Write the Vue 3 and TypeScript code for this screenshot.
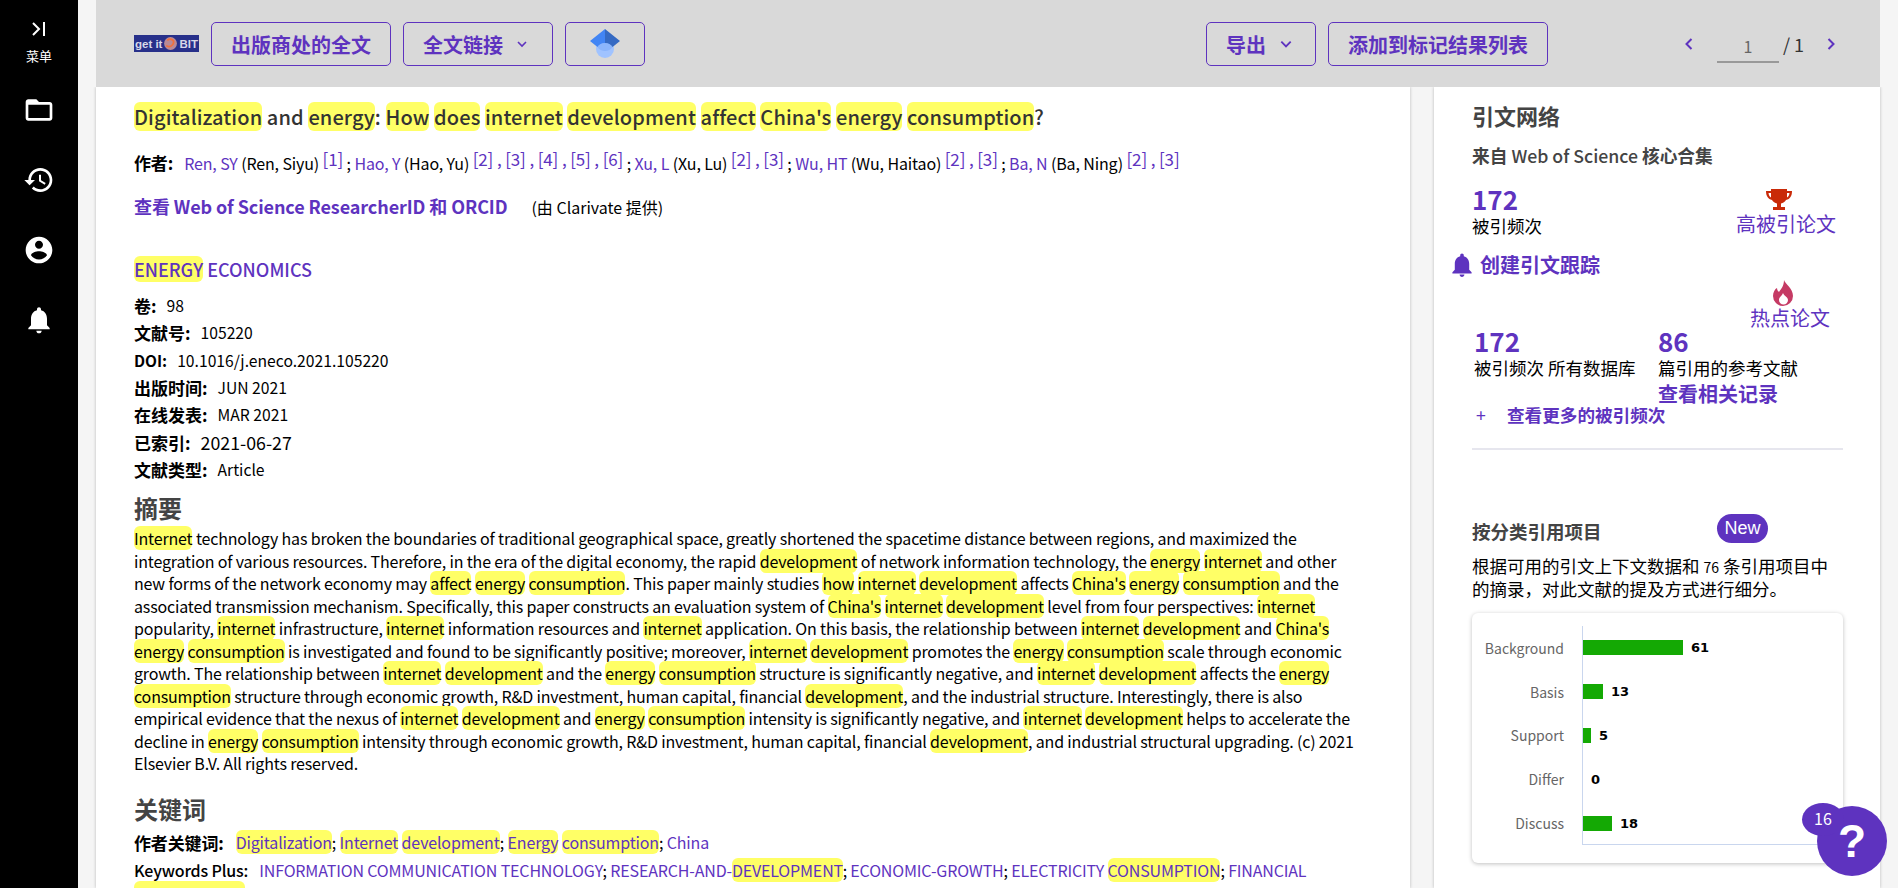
<script setup lang="ts">
const hitWords = /\b(digitalization|does|how|affect|china's|internet|development|energy|consumption)\b/i

function segs(text: string) {
  return text.split(new RegExp(hitWords.source, 'i')).map((t, i) => ({ t, hit: i % 2 === 1 }))
}

const title = "Digitalization and energy: How does internet development affect China's energy consumption?"

const authors = [
  { link: 'Ren, SY', name: '(Ren, Siyu)', refs: '[1]' },
  { link: 'Hao, Y', name: '(Hao, Yu)', refs: '[2] , [3] , [4] , [5] , [6]' },
  { link: 'Xu, L', name: '(Xu, Lu)', refs: '[2] , [3]' },
  { link: 'Wu, HT', name: '(Wu, Haitao)', refs: '[2] , [3]' },
  { link: 'Ba, N', name: '(Ba, Ning)', refs: '[2] , [3]' },
]

const meta = [
  { label: '卷:', value: '98' },
  { label: '文献号:', value: '105220' },
  { label: 'DOI:', value: '10.1016/j.eneco.2021.105220', latin: true },
  { label: '出版时间:', value: 'JUN 2021' },
  { label: '在线发表:', value: 'MAR 2021' },
  { label: '已索引:', value: '2021-06-27', big: true },
  { label: '文献类型:', value: 'Article' },
]

const abstractLines = [
  'Internet technology has broken the boundaries of traditional geographical space, greatly shortened the spacetime distance between regions, and maximized the',
  'integration of various resources. Therefore, in the era of the digital economy, the rapid development of network information technology, the energy internet and other',
  "new forms of the network economy may affect energy consumption. This paper mainly studies how internet development affects China's energy consumption and the",
  "associated transmission mechanism. Specifically, this paper constructs an evaluation system of China's internet development level from four perspectives: internet",
  "popularity, internet infrastructure, internet information resources and internet application. On this basis, the relationship between internet development and China's",
  'energy consumption is investigated and found to be significantly positive; moreover, internet development promotes the energy consumption scale through economic',
  'growth. The relationship between internet development and the energy consumption structure is significantly negative, and internet development affects the energy',
  'consumption structure through economic growth, R&D investment, human capital, financial development, and the industrial structure. Interestingly, there is also',
  'empirical evidence that the nexus of internet development and energy consumption intensity is significantly negative, and internet development helps to accelerate the',
  'decline in energy consumption intensity through economic growth, R&D investment, human capital, financial development, and industrial structural upgrading. (c) 2021',
  'Elsevier B.V. All rights reserved.',
]

const authorKeywords = ['Digitalization', 'Internet development', 'Energy consumption', 'China']
const keywordsPlus = ['INFORMATION COMMUNICATION TECHNOLOGY', 'RESEARCH-AND-DEVELOPMENT', 'ECONOMIC-GROWTH', 'ELECTRICITY CONSUMPTION', 'FINANCIAL']

const chart = [
  { label: 'Background', value: 61, width: 100 },
  { label: 'Basis', value: 13, width: 20 },
  { label: 'Support', value: 5, width: 8 },
  { label: 'Differ', value: 0, width: 0 },
  { label: 'Discuss', value: 18, width: 29 },
]

const navIcons = [
  'M20 6h-8l-2-2H4c-1.1 0-1.99.9-1.99 2L2 18c0 1.1.9 2 2 2h16c1.1 0 2-.9 2-2V8c0-1.1-.9-2-2-2zm0 12H4V8h16v10z',
  'M13 3c-4.97 0-9 4.03-9 9H1l3.89 3.89.07.14L9 12H6c0-3.87 3.13-7 7-7s7 3.13 7 7-3.13 7-7 7c-1.93 0-3.68-.79-4.94-2.06l-1.42 1.42C8.27 19.99 10.51 21 13 21c4.97 0 9-4.03 9-9s-4.03-9-9-9zm-1 5v5l4.28 2.54.72-1.21-3.5-2.08V8H12z',
  'M12 2C6.48 2 2 6.48 2 12s4.48 10 10 10 10-4.48 10-10S17.52 2 12 2zm0 3c1.66 0 3 1.34 3 3s-1.34 3-3 3-3-1.34-3-3 1.34-3 3-3zm0 14.2c-2.5 0-4.71-1.28-6-3.22.03-1.99 4-3.08 6-3.08 1.99 0 5.97 1.09 6 3.08-1.29 1.94-3.5 3.22-6 3.22z',
  'M12 22c1.1 0 2-.9 2-2h-4c0 1.1.89 2 2 2zm6-6v-5c0-3.07-1.64-5.64-4.5-6.32V4c0-.83-.67-1.5-1.5-1.5s-1.5.67-1.5 1.5v.68C7.63 5.36 6 7.92 6 11v5l-2 2v1h16v-1l-2-2z',
]
const bellPath = navIcons[3]
</script>

<template>
  <div class="page">
    <aside class="sidebar">
      <svg class="menu-icon" width="20" height="20" viewBox="0 0 20 20" fill="none" stroke="#fff" stroke-width="2">
        <path d="M4 4l6 6-6 6" />
        <path d="M15 3v14" />
      </svg>
      <div class="menu-label">菜单</div>
      <svg v-for="(d, i) in navIcons" :key="i" class="nav-icon" width="32" height="32" viewBox="0 0 24 24" fill="#fff">
        <path :d="d" />
      </svg>
    </aside>

    <div class="workspace">
      <header class="topbar">
        <div class="logo">
          <span>get it</span>
          <svg width="15" height="15" viewBox="0 0 14 14" fill="none">
            <circle cx="7" cy="7" r="6" fill="#b98a96" />
            <path d="M3 9c3 2 7 0 7-4M4 4c2-2 6-1 6 2" stroke="#f0703c" stroke-width="1.6" />
          </svg>
          <span>BIT</span>
        </div>
        <button class="btn">出版商处的全文</button>
        <button class="btn wide">
          全文链接
          <svg class="caret" width="12" height="12" viewBox="0 0 12 12" fill="none" stroke="#5e33bf" stroke-width="1.6"><path d="M2 4l4 4 4-4" /></svg>
        </button>
        <button class="btn scholar">
          <svg width="32" height="32" viewBox="0 0 32 32">
            <circle cx="16" cy="21" r="9" fill="#a0c3ff" />
            <path d="M16 1L1 13l7.5 6a9 9 0 0 1 7.5-4z" fill="#4285f4" />
            <path d="M16 1l15 12-7.5 6A9 9 0 0 0 16 15z" fill="#356ac3" />
            <path d="M8.500 19a9 9 0 0 1 15 0 9 9 0 0 1-15 0z" fill="#76a7fa" opacity=".5" />
          </svg>
        </button>
        <div class="spacer"></div>
        <button class="btn export">
          导出
          <svg class="caret" width="14" height="14" viewBox="0 0 12 12" fill="none" stroke="#5e33bf" stroke-width="1.6"><path d="M2 4l4 4 4-4" /></svg>
        </button>
        <button class="btn">添加到标记结果列表</button>
        <div class="pager">
          <svg width="14" height="14" viewBox="0 0 14 14" fill="none" stroke="#5e33bf" stroke-width="2"><path d="M9.500 2L4.500 7l5 5" /></svg>
          <span class="page-input">1</span>
          <span class="page-total">/ 1</span>
          <svg width="14" height="14" viewBox="0 0 14 14" fill="none" stroke="#5e33bf" stroke-width="2"><path d="M4.500 2l5 5-5 5" /></svg>
        </div>
      </header>

      <div class="columns">
        <main class="record">
          <h1 class="title">
            <span v-for="(s, i) in segs(title)" :key="i" :class="{ hl: s.hit }">{{ s.t }}</span>
          </h1>
          <div class="authors">
            <b class="authors-label">作者:</b>
            <template v-for="(a, i) in authors" :key="i">
              <a>{{ a.link }}</a> {{ a.name }} <a class="refs">{{ a.refs }}</a><template v-if="i < authors.length - 1"> ; </template>
            </template>
          </div>
          <div class="researcher">
            <a class="researcher-link">查看 Web of Science ResearcherID 和 ORCID</a>
            <span class="provided">(由 Clarivate 提供)</span>
          </div>
          <div class="journal"><span class="hl">ENERGY</span> ECONOMICS</div>
          <div v-for="m in meta" :key="m.label" class="meta-row">
            <b :class="{ latin: m.latin }">{{ m.label }}</b>
            <span :class="{ big: m.big }">{{ m.value }}</span>
          </div>
          <h2 class="abstract-head">摘要</h2>
          <p class="abstract">
            <span v-for="(line, n) in abstractLines" :key="n" class="abstract-line">
              <span v-for="(s, i) in segs(line)" :key="i" :class="{ hl: s.hit }">{{ s.t }}</span>
            </span>
          </p>
          <h2 class="keywords-head">关键词</h2>
          <div class="keywords first">
            <b>作者关键词:</b>
            <span class="keyword-list">
              <template v-for="(k, n) in authorKeywords" :key="k">
                <a><span v-for="(s, i) in segs(k)" :key="i" :class="{ hl: s.hit }">{{ s.t }}</span></a><template v-if="n < authorKeywords.length - 1">; </template>
              </template>
            </span>
          </div>
          <div class="keywords plus">
            <b>Keywords Plus:</b>
            <span class="keyword-list">
              <template v-for="(k, n) in keywordsPlus" :key="k">
                <a><span v-for="(s, i) in segs(k)" :key="i" :class="{ hl: s.hit }">{{ s.t }}</span></a><template v-if="n < keywordsPlus.length - 1">; </template>
              </template>
            </span>
          </div>
          <div class="keywords-more"><a class="hl">DEVELOPMENT</a></div>
        </main>

        <aside class="citations">
          <h2 class="net-title">引文网络</h2>
          <div class="net-source">来自 <span>Web of Science</span> 核心合集</div>
          <div class="count-row">
            <div>
              <div class="count">172</div>
              <div class="count-label">被引频次</div>
            </div>
            <div class="badge-paper">
              <svg class="shift-icon" width="28" height="24" viewBox="0 0 28 24" fill="#c92a08">
                <path d="M6 1h16v2h5c0 5-2 8-6 9-1 2-3 3-5 3.500V19h4v3H8v-3h4v-3.500c-2-.5-4-1.500-5-3.500-4-1-6-4-6-9h5zM3.500 5c.3 2 1 3.500 2.500 4.500V5zM24.500 5H22v4.500c1.500-1 2.200-2.500 2.500-4.500z" />
              </svg>
              <a>高被引论文</a>
            </div>
          </div>
          <a class="track">
            <svg width="24" height="28" viewBox="2 1 20 22" fill="#5e33bf"><path :d="bellPath" /></svg>
            创建引文跟踪
          </a>
          <div class="hot-paper">
            <svg class="shift-icon" width="20" height="26" viewBox="0 0 20 26" fill="#c53a64">
              <path fill-rule="evenodd" d="M11 0c1 4 9 8 9 16a10 10 0 0 1-20 0c0-4 2-7 4-8 0 2 1 3 2 4 2-3 5-6 5-12zM10 13c-1 3-4 4-4 7a4.500 4.500 0 0 0 9 0c0-3-4-4-5-7z" />
            </svg>
            <a>热点论文</a>
          </div>
          <div class="stats">
            <div class="stat">
              <div class="count">172</div>
              <div class="count-label">被引频次 所有数据库</div>
            </div>
            <div class="stat">
              <div class="count">86</div>
              <div class="count-label">篇引用的参考文献</div>
              <a class="related">查看相关记录</a>
            </div>
          </div>
          <a class="more"><span class="plus-sign">+</span>查看更多的被引频次</a>
          <div class="divider"></div>

          <div class="class-head">
            <h3>按分类引用项目</h3>
            <span class="new-pill">New</span>
          </div>
          <p class="class-desc">根据可用的引文上下文数据和 <span class="small-num">76</span> 条引用项目中的摘录，对此文献的提及方式进行细分。</p>
          <div class="chart">
            <div class="plot">
              <div v-for="row in chart" :key="row.label" class="chart-row">
                <span class="chart-label">{{ row.label }}</span>
                <span class="chart-bar" :style="{ width: row.width + 'px' }"></span>
                <b class="chart-value">{{ row.value }}</b>
              </div>
            </div>
          </div>
        </aside>
      </div>
    </div>

    <div class="help">
      <span class="help-count">16</span>
      <span class="help-mark">?</span>
    </div>
  </div>
</template>

<style>
html,
body {
  margin: 0;
  overflow: hidden;
}
</style>

<style scoped>
.page {
  display: flex;
  position: relative;
  width: 1898px;
  height: 888px;
  overflow: hidden;
  background: #f5f5f5;
  color: #000;
  font-family: "Noto Sans CJK SC", "Noto Sans", sans-serif;
  font-size: 16px;
}

a {
  color: #5e33bf;
}

.hl {
  background: #ffff66;
  border-radius: 6px;
}

.sidebar {
  flex: 0 0 78px;
  display: flex;
  flex-direction: column;
  align-items: center;
  background: #000;
  color: #fff;
  padding-top: 19px;
  box-sizing: border-box;
}

.menu-label {
  font-size: 13px;
  line-height: 20px;
  margin-top: 7px;
  margin-bottom: 28px;
}

.nav-icon {
  margin-bottom: 38px;
}

.workspace {
  flex: 0 0 1784px;
  margin-left: 18px;
  display: flex;
  flex-direction: column;
}

.topbar {
  flex: 0 0 87px;
  display: flex;
  align-items: flex-start;
  gap: 12px;
  padding: 22px 0 0 38px;
  box-sizing: border-box;
  background: #d9d9d9;
}

.logo {
  display: flex;
  align-items: center;
  justify-content: center;
  gap: 1px;
  width: 65px;
  height: 17px;
  margin: 13px 0 0;
  background: #27308a;
  color: #d8d8e8;
  font: bold 11.5px "Liberation Sans", sans-serif;
  overflow: hidden;
}

.btn {
  display: flex;
  align-items: center;
  height: 44px;
  padding: 0 19px;
  border: 1px solid #5e33bf;
  border-radius: 5px;
  background: transparent;
  color: #5e33bf;
  font-family: inherit;
  font-size: 20px;
  font-weight: 700;
  box-sizing: border-box;
}

.btn.wide {
  padding-right: 24px;
}

.btn.export {
  padding-right: 22px;
}

.caret {
  margin-left: 13px;
}

.scholar {
  width: 80px;
  justify-content: center;
  padding: 0;
}

.spacer {
  flex: 1;
}

.pager {
  display: flex;
  align-items: center;
  width: 320px;
  height: 44px;
  padding-left: 122px;
  box-sizing: border-box;
  color: #333;
}

.page-input {
  width: 62px;
  margin-left: 21px;
  padding-bottom: 2px;
  border-bottom: 2px solid #999;
  color: #666;
  text-align: center;
  font-size: 16px;
  line-height: 26px;
  margin-top: 8px;
}

.page-total {
  margin: 0 20px 0 4px;
  font-size: 18px;
}

.columns {
  flex: 1;
  display: flex;
  gap: 24px;
  min-height: 0;
}

.record {
  flex: 0 0 1314px;
  padding: 0 0 0 38px;
  box-sizing: border-box;
  background: #fff;
  box-shadow: 0 0 3px rgba(0, 0, 0, 0.25);
  clip-path: inset(0 -4px 0 -4px);
  overflow: hidden;
  white-space: nowrap;
}

.title {
  margin: 15px 0 0;
  font-size: 20px;
  font-weight: 500;
  line-height: 30px;
  letter-spacing: 0.11px;
  color: #333;
}

.authors {
  margin-top: 18px;
  line-height: 26px;
  font-size: 16px;
  letter-spacing: -0.13px;
}

.authors-label {
  margin-right: 11px;
  font-size: 17px;
}

.refs {
  position: relative;
  top: -4px;
  font-size: 17px;
}

.researcher {
  margin-top: 17px;
  line-height: 27px;
}

.researcher-link {
  font-size: 18px;
  font-weight: 700;
  letter-spacing: -0.1px;
}

.provided {
  margin-left: 24px;
}

.journal {
  margin-top: 35px;
  line-height: 27px;
  font-size: 18px;
  font-weight: 500;
  color: #5e33bf;
}

.meta-row {
  display: flex;
  gap: 10px;
  align-items: center;
  height: 27.3px;
  font-size: 15.7px;
}

.meta-row b {
  font-size: 17px;
}

.meta-row b.latin {
  font-size: 15.5px;
}

.big {
  font-size: 17.800px;
}

.journal + .meta-row {
  margin-top: 9px;
}

.abstract-head,
.keywords-head {
  margin: 0;
  font-size: 24px;
  font-weight: 700;
  line-height: 32px;
  color: #444;
}

.abstract-head {
  margin-top: 9px;
}

.abstract {
  margin: 3px 0 0;
}

.abstract-line {
  display: block;
  height: 22.5px;
  line-height: 22.5px;
  font-size: 16px;
  letter-spacing: -0.165px;
}

.keywords-head {
  margin-top: 18px;
}

.keywords {
  display: flex;
  gap: 12px;
  line-height: 27px;
  margin-top: 1px;
  letter-spacing: -0.15px;
}

.keywords b {
  font-size: 17px;
}

.keywords.first {
  margin-top: 4px;
}

.keywords.plus {
  gap: 11px;
  letter-spacing: -0.16px;
}

.keywords.plus b {
  font-size: 16px;
  font-weight: 500;
}

.keywords-more {
  margin-top: -3px;
  line-height: 25px;
  letter-spacing: -0.16px;
}

.citations {
  flex: 0 0 446px;
  padding: 13px 0 0 38px;
  box-sizing: border-box;
  background: #fff;
  box-shadow: 0 0 3px rgba(0, 0, 0, 0.25);
  clip-path: inset(0 -4px 0 -4px);
  white-space: nowrap;
  overflow: hidden;
}

.net-title {
  margin: 0;
  font-size: 22px;
  font-weight: 700;
  line-height: 30px;
  color: #444;
}

.net-source {
  margin-top: 10px;
  font-size: 17.700px;
  font-weight: 700;
  line-height: 30px;
  color: #444;
}

.net-source span {
  font-weight: 500;
}

.count-row {
  display: flex;
  justify-content: space-between;
  width: 364px;
  margin-top: 14px;
}

.count {
  font-size: 26px;
  font-weight: 700;
  line-height: 30px;
  color: #5e33bf;
}

.count-label {
  line-height: 23px;
  font-size: 17.500px;
}

.badge-paper {
  display: flex;
  flex-direction: column;
  align-items: center;
  font-size: 20px;
  line-height: 28px;
  margin-top: 4px;
}

.badge-paper a {
  margin-top: -2px;
}

.shift-icon {
  margin-right: 14px;
}

.track {
  display: flex;
  align-items: center;
  gap: 6px;
  margin: 13px 0 0 -22px;
  font-size: 20px;
  font-weight: 700;
  line-height: 28px;
}

.hot-paper {
  display: flex;
  flex-direction: column;
  align-items: center;
  width: 80px;
  margin: 1px 0 0 278px;
  font-size: 20px;
  line-height: 30px;
}

.hot-paper a {
  margin-top: -3px;
}

.stats {
  display: flex;
  margin: -7px 0 0 0;
}

.stat {
  width: 184px;
}

.stat:first-child {
  margin-left: 2px;
}

.related {
  display: block;
  margin-top: 2px;
  font-size: 20px;
  font-weight: 700;
  line-height: 26px;
}

.more {
  display: block;
  margin: -6px 0 0 4px;
  font-size: 17.600px;
  font-weight: 700;
  line-height: 28px;
}

.plus-sign {
  display: inline-block;
  width: 31px;
  font-weight: 400;
}

.divider {
  width: 371px;
  height: 2px;
  margin-top: 19px;
  background: #e6e6ee;
}

.class-head {
  display: flex;
  align-items: flex-start;
  margin-top: 64px;
}

.class-head h3 {
  margin: 3px 0 0;
  width: 245px;
  font-size: 18.500px;
  font-weight: 700;
  line-height: 28px;
  color: #444;
}

.new-pill {
  width: 51px;
  height: 29px;
  border-radius: 15px;
  background: #5e33bf;
  color: #fff;
  text-align: center;
  font-family: "Liberation Sans", sans-serif;
  font-size: 18px;
  line-height: 29px;
}

.class-desc {
  width: 364px;
  margin: 10px 0 0;
  font-size: 17.500px;
  line-height: 22px;
  white-space: normal;
}

.small-num {
  font-size: 14px;
}

.chart {
  width: 371px;
  height: 250px;
  margin-top: 13px;
  padding: 13px 0 0;
  box-sizing: border-box;
  border-radius: 6px;
  box-shadow: 0 1px 4px rgba(0, 0, 0, 0.25);
}

.plot {
  display: flex;
  flex-direction: column;
  height: 219px;
  background:
    linear-gradient(#c9d6ee, #c9d6ee) 110px 0 / 1px 100% no-repeat,
    linear-gradient(#c9d6ee, #c9d6ee) 110px 100% / 100% 1px no-repeat;
}

.chart-row {
  display: flex;
  align-items: center;
  height: 43.8px;
  font-size: 14px;
}

.chart-label {
  flex: 0 0 92px;
  text-align: right;
  margin-right: 18px;
  color: #666;
}

.chart-bar {
  height: 15px;
  background: #14a904;
  margin-left: 1px;
  margin-right: 8px;
}

.chart-value {
  font-family: "DejaVu Sans", sans-serif;
  font-size: 13px;
}

.help {
  position: absolute;
  left: 1817px;
  top: 806px;
  width: 70px;
  height: 70px;
  border-radius: 50%;
  background: #5e33bf;
  color: #fff;
  text-align: center;
}

.help-count {
  position: absolute;
  left: -15px;
  top: -3px;
  width: 42px;
  height: 33px;
  border-radius: 50%;
  background: #5e33bf;
  font-size: 16px;
  line-height: 30px;
}

.help-mark {
  position: relative;
  font-family: "Liberation Sans", sans-serif;
  font-size: 46px;
  font-weight: 700;
  line-height: 70px;
}
</style>
